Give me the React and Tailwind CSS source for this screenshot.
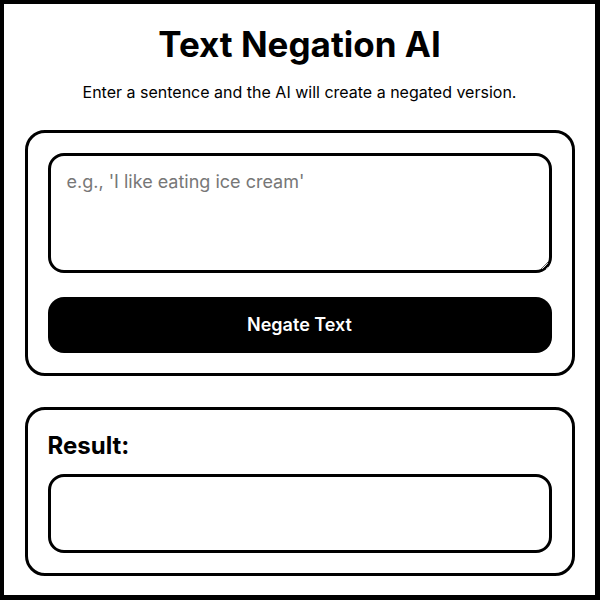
export default function App() {
  return (
    <div
      className="w-[600px] h-[600px] border-4 border-r-[5px] border-b-[5px] border-black bg-white overflow-hidden"
      style={{ fontFamily: "Inter, 'Noto Sans', sans-serif" }}
    >
      <div className="max-w-[550px] mx-auto pt-5">
        <h1 className="text-[35px] font-bold text-black text-center leading-10">Text Negation AI</h1>
        <p className="mt-4 text-base text-black text-center leading-6">
          Enter a sentence and the AI will create a negated version.
        </p>
        <div className="mt-[26px] border-[3px] border-black rounded-[20px] p-5">
          <textarea
            className="block w-full h-[120px] border-[3px] border-black rounded-2xl px-4 pt-3 pb-4 text-lg resize-y outline-none placeholder:text-[#777777]"
            placeholder="e.g., 'I like eating ice cream'"
          />
          <button className="mt-6 w-full h-14 bg-black text-white rounded-2xl text-lg font-semibold">
            Negate Text
          </button>
        </div>
        <div className="mt-[31px] border-[3px] border-black rounded-[20px] p-5">
          <h2 className="text-2xl font-bold leading-8 text-black">Result:</h2>
          <div className="mt-3 h-[79px] border-[3px] border-black rounded-2xl"></div>
        </div>
      </div>
    </div>
  );
}
